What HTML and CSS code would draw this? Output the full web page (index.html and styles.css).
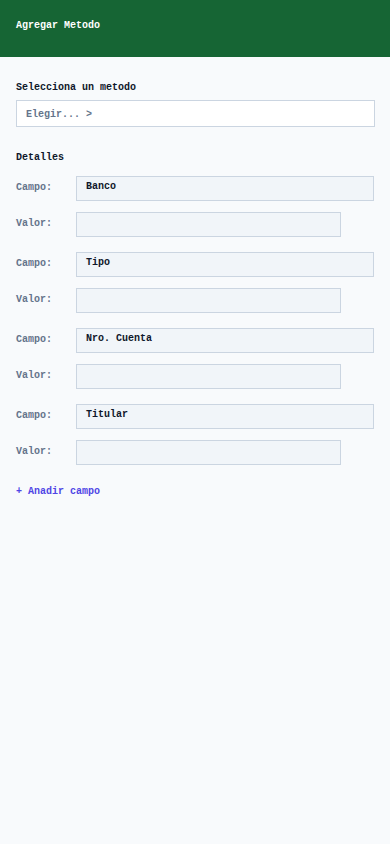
FILE: index.html
```html
<!DOCTYPE html>
<html lang="es">
<head>
<meta charset="utf-8">
<meta name="viewport" content="width=device-width, initial-scale=1">
<title>Agregar Metodo</title>
<link rel="stylesheet" href="styles.css">
</head>
<body>
<header class="topbar">Agregar Metodo</header>
<main class="content">
  <div class="section-title">Selecciona un metodo</div>
  <div class="select">Elegir... &gt;</div>
  <div class="section-title details-title">Detalles</div>
  <div class="fields">
    <div class="pair">
      <div class="row"><span class="label">Campo:</span><div class="input wide">Banco</div></div>
      <div class="row"><span class="label">Valor:</span><div class="input narrow"></div></div>
    </div>
    <div class="pair">
      <div class="row"><span class="label">Campo:</span><div class="input wide">Tipo</div></div>
      <div class="row"><span class="label">Valor:</span><div class="input narrow"></div></div>
    </div>
    <div class="pair">
      <div class="row"><span class="label">Campo:</span><div class="input wide">Nro. Cuenta</div></div>
      <div class="row"><span class="label">Valor:</span><div class="input narrow"></div></div>
    </div>
    <div class="pair">
      <div class="row"><span class="label">Campo:</span><div class="input wide">Titular</div></div>
      <div class="row"><span class="label">Valor:</span><div class="input narrow"></div></div>
    </div>
  </div>
  <div class="add-link">+ Anadir campo</div>
</main>
</body>
</html>
```
FILE: styles.css
```css
* { box-sizing: border-box; }
html, body {
  margin: 0;
  padding: 0;
  background: #f8fafc;
}
body {
  font-family: "Liberation Mono", "DejaVu Sans Mono", monospace;
  font-weight: bold;
  font-size: 10px;
  line-height: 16px;
  color: #0f172a;
  min-height: 844px;
}
.topbar {
  height: 57px;
  background: #166534;
  color: #ffffff;
  padding: 18px 16px 0;
}
.content {
  padding: 23px 16px 0;
}
.section-title {
  color: #0f172a;
}
.select {
  margin-top: 4px;
  height: 27px;
  width: 359px;
  background: #ffffff;
  border: 1px solid #cbd5e1;
  padding: 1px 9px 0;
  line-height: 25px;
  color: #64748b;
}
.details-title {
  margin-top: 23px;
}
.fields {
  margin-top: 10px;
  display: flex;
  flex-direction: column;
  gap: 15px;
}
.pair {
  display: flex;
  flex-direction: column;
  gap: 11px;
}
.row {
  display: flex;
  align-items: flex-start;
}
.label {
  width: 60px;
  flex: none;
  padding-top: 4px;
  color: #64748b;
}
.input {
  height: 25px;
  background: #f1f5f9;
  border: 1px solid #cbd5e1;
  padding: 2px 9px 0;
  color: #0f172a;
}
.input.wide { width: 299px; }
.input.narrow { width: 265px; }
.add-link {
  margin-top: 19px;
  color: #4f46e5;
}
```
